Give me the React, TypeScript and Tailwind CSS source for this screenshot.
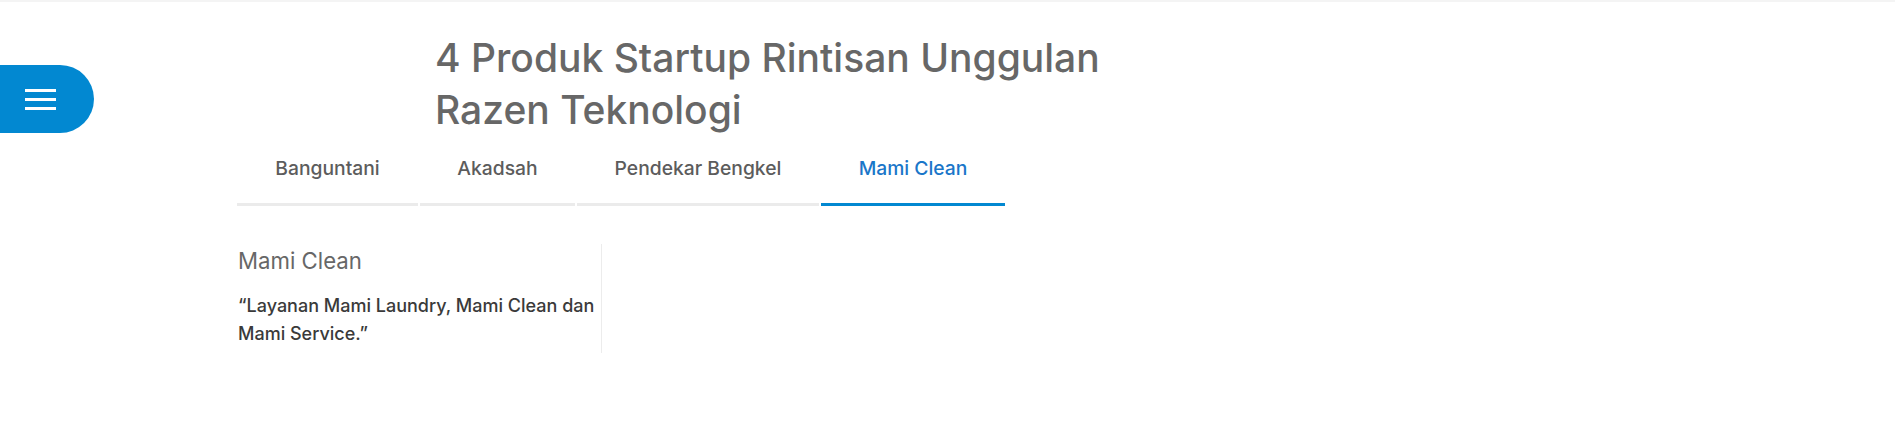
import { useState } from "react";

const tabs = [
  { name: "Banguntani", w: "w-[181px]" },
  { name: "Akadsah", w: "w-[155px]" },
  { name: "Pendekar Bengkel", w: "w-[242px]" },
  { name: "Mami Clean", w: "w-[184px]" },
];

const products: Record<string, { title: string; quote: string }> = {
  Banguntani: { title: "Banguntani", quote: "\u201cPlatform pertanian digital.\u201d" },
  Akadsah: { title: "Akadsah", quote: "\u201cLayanan akad nikah online.\u201d" },
  "Pendekar Bengkel": { title: "Pendekar Bengkel", quote: "\u201cLayanan bengkel panggilan.\u201d" },
  "Mami Clean": {
    title: "Mami Clean",
    quote: "\u201cLayanan Mami Laundry, Mami Clean dan Mami Service.\u201d",
  },
};

export default function App() {
  const [active, setActive] = useState("Mami Clean");
  const product = products[active];

  return (
    <div className="relative min-h-screen bg-white font-['Inter',sans-serif]">
      <div className="h-[2px] bg-[#f4f4f4]" />

      {/* floating menu */}
      <button className="absolute left-0 top-[65px] flex h-[68px] w-[94px] items-center rounded-r-[34px] bg-[#0288d1] pl-[25px]">
        <span className="flex w-[31px] flex-col gap-[6px]">
          <span className="h-[3px] bg-white" />
          <span className="h-[3px] bg-white" />
          <span className="h-[3px] bg-white" />
        </span>
      </button>

      <div className="pl-[237px] pt-[30px]">
        <h1 className="ml-[198px] text-[39px] leading-[52px] font-medium text-[#676767]">
          4 Produk Startup Rintisan Unggulan
          <br />
          Razen Teknologi
        </h1>

        {/* tabs */}
        <div className="flex gap-[2px]">
          {tabs.map((t) => {
            const on = t.name === active;
            return (
              <button
                key={t.name}
                onClick={() => setActive(t.name)}
                className={
                  "flex h-[70px] items-center justify-center border-b-[3px] pb-[3px] text-[19.3px] font-medium " +
                  t.w +
                  (on ? " border-[#0288d1] text-[#1a76c9]" : " border-[#ebebeb] text-[#5c5c5c]")
                }
              >
                {t.name}
              </button>
            );
          })}
        </div>

        {/* content */}
        <div className="ml-[1px] mt-[38px] w-[364px] border-r border-[#ececec] pt-[2px] pb-[5px]">
          <h3 className="text-[22.2px] leading-[30px] text-[#676767]">{product.title}</h3>
          <p className="mt-[16px] text-[18px] leading-[28px] font-medium text-[#3a3a3a]">{product.quote}</p>
        </div>
      </div>
    </div>
  );
}
